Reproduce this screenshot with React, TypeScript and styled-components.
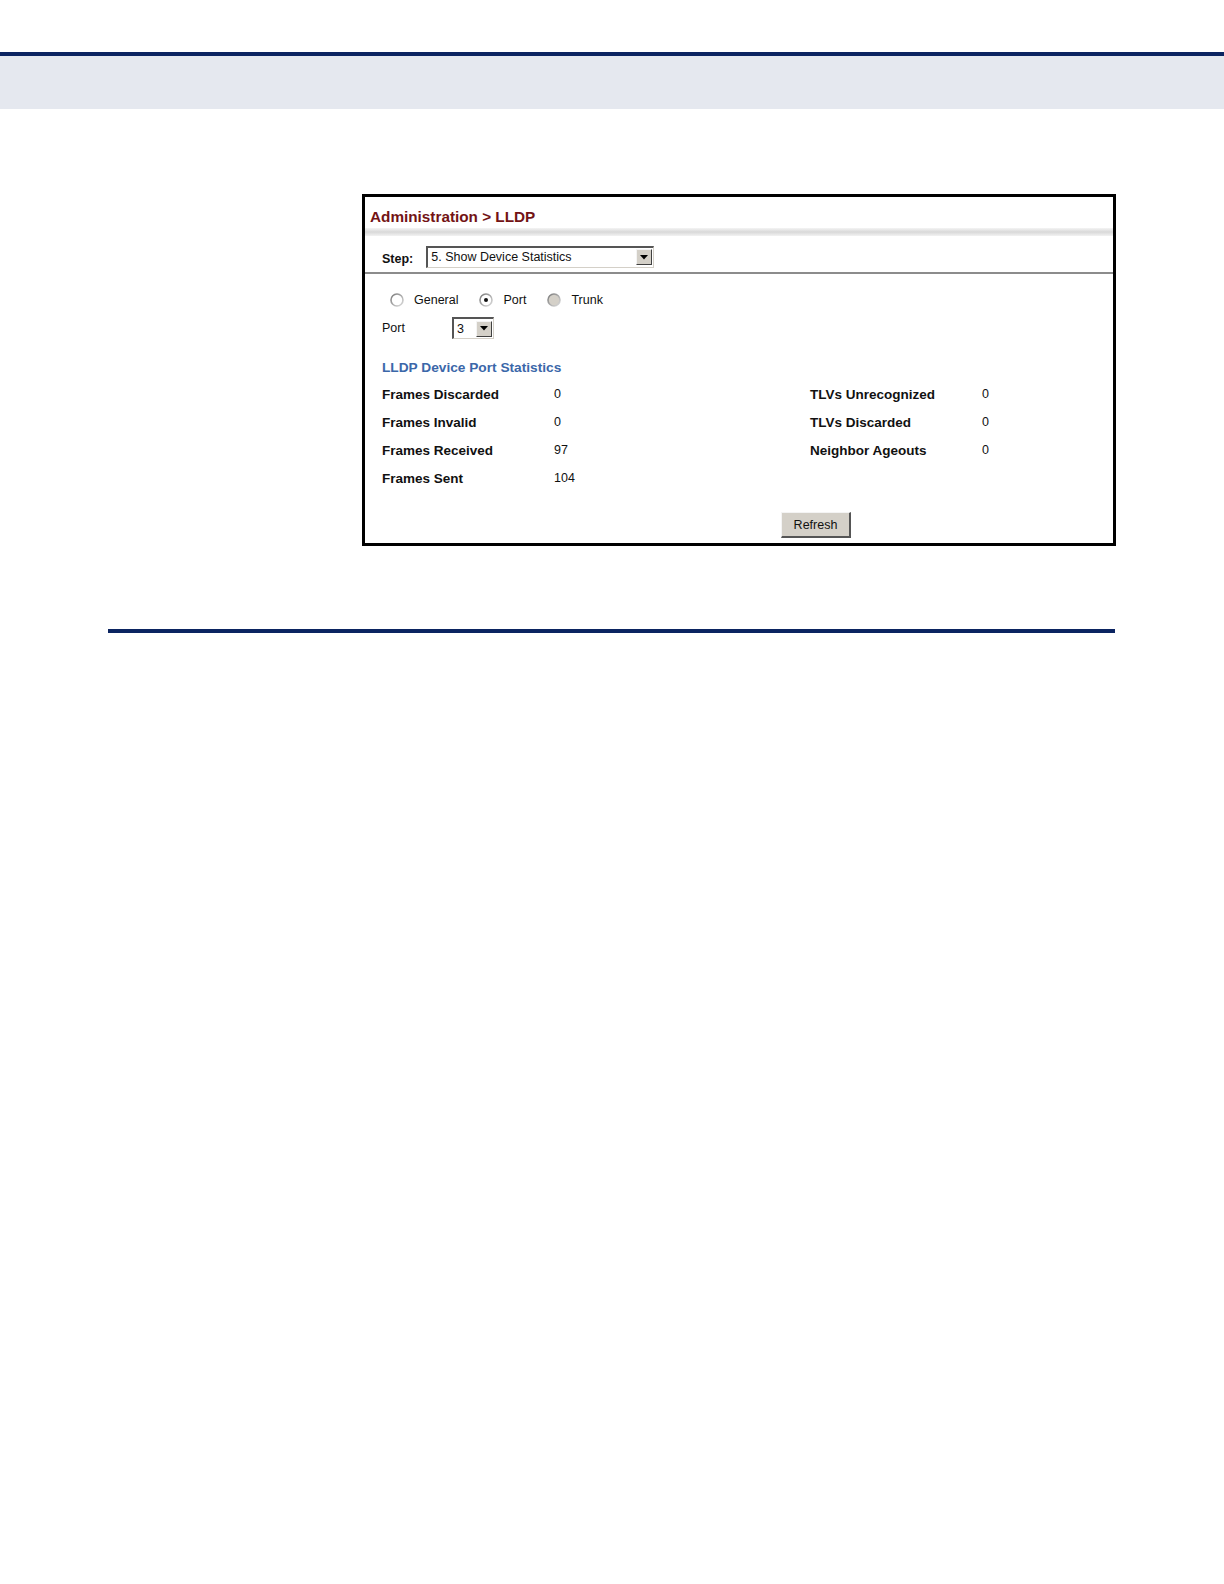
import React from 'react';
import styled, { createGlobalStyle } from 'styled-components';

const GlobalStyle = createGlobalStyle`
  html, body {
    margin: 0;
    padding: 0;
    background: #ffffff;
  }
  body {
    font-family: "Liberation Sans", Arial, sans-serif;
  }
`;

const leftStats = [
  { label: 'Frames Discarded', value: '0' },
  { label: 'Frames Invalid', value: '0' },
  { label: 'Frames Received', value: '97' },
  { label: 'Frames Sent', value: '104' },
];

const rightStats = [
  { label: 'TLVs Unrecognized', value: '0' },
  { label: 'TLVs Discarded', value: '0' },
  { label: 'Neighbor Ageouts', value: '0' },
];

const Radio: React.FC<{ checked?: boolean; disabled?: boolean }> = ({ checked = false, disabled = false }) => (
  <svg width="14" height="14" viewBox="0 0 14 14">
    <defs>
      <linearGradient id="rimg" x1="0" y1="0" x2="1" y2="1">
        <stop offset="0" stopColor="#7a7a7a" />
        <stop offset="1" stopColor="#dcdcdc" />
      </linearGradient>
    </defs>
    <circle cx="7" cy="7" r="6" fill={disabled ? '#d4d0c8' : '#ffffff'} stroke="url(#rimg)" strokeWidth="1.6" />
    {checked && <circle cx="7" cy="7" r="2" fill="#111" />}
  </svg>
);

const ArrowButton: React.FC = () => (
  <ArrowBox>
    <svg width="8" height="5" viewBox="0 0 8 5">
      <polygon points="0,0 8,0 4,4.5" fill="#000" />
    </svg>
  </ArrowBox>
);

const App: React.FC = () => (
  <>
    <GlobalStyle />
    <TopRule />
    <HeaderBand />
    <Figure>
      <Panel>
        <TitleBar>Administration &gt; LLDP</TitleBar>
        <TitleShade />
        <StepRow>
          <StepLabel>Step:</StepLabel>
          <Select width={228}>
            <SelectText>5. Show Device Statistics</SelectText>
            <ArrowButton />
          </Select>
        </StepRow>
        <Body>
          <RadioRow>
            <RadioItem>
              <Radio />
              <RadioText>General</RadioText>
            </RadioItem>
            <RadioItem>
              <Radio checked />
              <RadioText>Port</RadioText>
            </RadioItem>
            <RadioItem>
              <Radio disabled />
              <RadioText>Trunk</RadioText>
            </RadioItem>
          </RadioRow>
          <PortRow>
            <PortLabel>Port</PortLabel>
            <Select width={42}>
              <SelectText>3</SelectText>
              <ArrowButton />
            </Select>
          </PortRow>
          <SectionTitle>LLDP Device Port Statistics</SectionTitle>
          <StatsGrid>
            <StatsColumn>
              {leftStats.map(s => (
                <StatRow key={s.label}>
                  <StatLabel>{s.label}</StatLabel>
                  <StatValue>{s.value}</StatValue>
                </StatRow>
              ))}
            </StatsColumn>
            <StatsColumn>
              {rightStats.map(s => (
                <StatRow key={s.label}>
                  <StatLabel>{s.label}</StatLabel>
                  <StatValue>{s.value}</StatValue>
                </StatRow>
              ))}
            </StatsColumn>
          </StatsGrid>
          <ButtonRow>
            <RefreshButton>Refresh</RefreshButton>
          </ButtonRow>
        </Body>
      </Panel>
    </Figure>
    <BottomRule />
  </>
);

const TopRule = styled.div`
  margin-top: 52px;
  height: 4px;
  background: #0b2461;
`;
const HeaderBand = styled.div`
  height: 53px;
  background: #e5e8ef;
`;
const Figure = styled.div`
  padding: 85px 0 0 362px;
`;
const Panel = styled.div`
  width: 748px;
  height: 346px;
  border: 3px solid #000;
  box-sizing: content-box;
  display: flex;
  flex-direction: column;
`;
const TitleBar = styled.div`
  height: 31px;
  padding: 11px 0 0 5px;
  box-sizing: border-box;
  font-family: "Liberation Sans", Arial, sans-serif;
  font-size: 15.3px;
  font-weight: bold;
  color: #731315;
  line-height: 18px;
`;
const TitleShade = styled.div`
  height: 8px;
  background: linear-gradient(180deg, #f4f4f4 0%, #d8d8d8 50%, #f2f2f2 100%);
`;
const StepRow = styled.div`
  height: 38px;
  display: flex;
  align-items: center;
  padding: 5px 0 0 17px;
  box-sizing: border-box;
  border-bottom: 2px solid #8c8c8c;
  gap: 13px;
`;
const StepLabel = styled.span`
  font-family: "Liberation Sans", Arial, sans-serif;
  font-size: 12.5px;
  font-weight: bold;
  color: #111;
  padding-top: 4px;
`;
const Select = styled.div<{ width: number }>`
  width: ${p => p.width}px;
  height: 22px;
  box-sizing: border-box;
  display: flex;
  align-items: center;
  justify-content: space-between;
  border-top: 2px solid #555;
  border-left: 2px solid #555;
  border-right: 1px solid #d4d0c8;
  border-bottom: 1px solid #d4d0c8;
  background: #fff;
  padding: 0 1px 0 3px;
`;
const SelectText = styled.span`
  font-size: 12.5px;
  color: #111;
`;
const ArrowBox = styled.div`
  width: 16px;
  height: 16px;
  box-sizing: border-box;
  background: #d4d0c8;
  border-top: 1px solid #f4f4f4;
  border-left: 1px solid #f4f4f4;
  border-right: 1px solid #404040;
  border-bottom: 1px solid #404040;
  display: flex;
  align-items: center;
  justify-content: center;
`;
const Body = styled.div`
  flex: 1;
  display: flex;
  flex-direction: column;
  padding: 0 0 0 17px;
`;
const RadioRow = styled.div`
  display: flex;
  align-items: center;
  gap: 21px;
  margin-top: 18px;
  padding-left: 8px;
  height: 16px;
`;
const RadioItem = styled.label`
  display: flex;
  align-items: center;
  gap: 10px;
`;
const RadioText = styled.span`
  font-size: 12.5px;
  color: #111;
`;
const PortRow = styled.div`
  display: flex;
  align-items: center;
  margin-top: 9px;
  height: 22px;
`;
const PortLabel = styled.span`
  width: 70px;
  font-size: 12.5px;
  color: #111;
`;
const SectionTitle = styled.div`
  margin-top: 21px;
  font-size: 13.7px;
  font-weight: bold;
  color: #3b67a9;
  height: 16px;
`;
const StatsGrid = styled.div`
  display: grid;
  grid-template-columns: 428px 1fr;
  margin-top: 4px;
`;
const StatsColumn = styled.div`
  display: flex;
  flex-direction: column;
`;
const StatRow = styled.div`
  display: flex;
  align-items: center;
  height: 28px;
`;
const StatLabel = styled.span`
  width: 172px;
  font-size: 13.5px;
  font-weight: bold;
  color: #111;
`;
const StatValue = styled.span`
  font-size: 12.5px;
  color: #111;
`;
const ButtonRow = styled.div`
  display: flex;
  padding-left: 399px;
  margin-top: 20px;
`;
const RefreshButton = styled.button`
  width: 70px;
  height: 26px;
  background: #d4d0c8;
  border-top: 1px solid #f4f4f4;
  border-left: 1px solid #f4f4f4;
  border-right: 2px solid #555;
  border-bottom: 2px solid #555;
  font-family: "Liberation Sans", Arial, sans-serif;
  font-size: 12.5px;
  color: #111;
  padding: 0;
`;
const BottomRule = styled.div`
  margin: 83px 0 0 108px;
  width: 1007px;
  height: 4px;
  background: #0b2461;
`;

export default App;
